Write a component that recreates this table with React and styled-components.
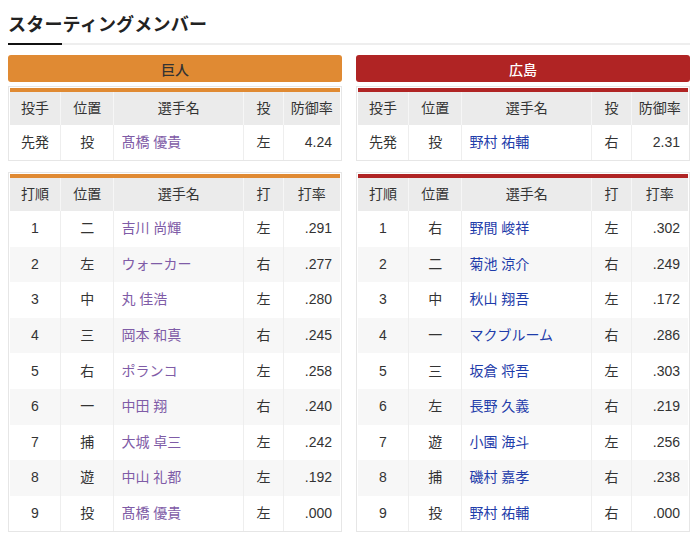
import React from "react";
import styled, { createGlobalStyle } from "styled-components";

const GlobalStyle = createGlobalStyle`
  body {
    margin: 0;
    background: #ffffff;
    font-family: "Liberation Sans", "Noto Sans CJK JP", "Noto Sans", sans-serif;
    color: #333333;
  }
`;

const Page = styled.div`
  width: 700px;
  padding: 8px 10px 0 8px;
  box-sizing: border-box;
`;

const TitleBox = styled.div`
  border-bottom: 2px solid #eeeeee;
  position: relative;
  padding: 2px 0 7px;
  margin-bottom: 10px;
`;

const Title = styled.h2`
  margin: 0;
  font-family: "Noto Sans CJK JP", sans-serif;
  font-size: 18px;
  font-weight: 700;
  line-height: 26px;
  color: #222222;
  letter-spacing: 0.2px;
`;

const TitleAccent = styled.span`
  position: absolute;
  left: 0;
  bottom: -2px;
  width: 54px;
  height: 2px;
  background: #111111;
`;

const Columns = styled.div`
  display: grid;
  grid-template-columns: 1fr 1fr;
  column-gap: 14px;
`;

const TeamColumn = styled.div`
  display: flex;
  flex-direction: column;
`;

const TeamBar = styled.div`
  height: 27px;
  border-radius: 3px;
  background: ${(p) => p.$color};
  color: ${(p) => p.$text};
  display: flex;
  align-items: center;
  justify-content: center;
  font-size: 14px;
  font-weight: 500;
  margin-bottom: 4px;
`;

const TableFrame = styled.div`
  border: 1px solid #e6e6e6;
  padding: 1px 1px 0;
  margin-bottom: ${(p) => p.$gap || 0}px;
`;

const Table = styled.table`
  width: 100%;
  border-collapse: collapse;
  table-layout: fixed;
  border-top: 4px solid ${(p) => p.$color};
  font-size: 14px;
  line-height: 18px;
`;

const Th = styled.th`
  height: 32px;
  padding: 0 0 1px;
  background: #ebebeb;
  font-weight: 400;
  color: #333333;
  border-left: 1px solid #f6f6f6;
  &:first-child {
    border-left: none;
  }
`;

const Row = styled.tr`
  background: ${(p) => (p.$odd ? "#ffffff" : "#f7f7f7")};
`;

const Td = styled.td`
  height: ${(p) => (p.$h || 35.6) - 1}px;
  padding: ${(p) => (p.$align === "left" ? "0 0 1px 7px" : p.$align === "right" ? "0 8px 1px 0" : "0 0 1px")};
  text-align: ${(p) => p.$align || "center"};
  border-left: 1px solid #eeeeee;
  color: ${(p) => p.$color || "#333333"};
  white-space: nowrap;
  &:first-child {
    border-left: none;
  }
`;

const widths = ["15.3%", "16.2%", "39.3%", "12%", "17.2%"];

const Cols = () => (
  <colgroup>
    {widths.map((w, i) => (
      <col key={i} style={{ width: w }} />
    ))}
  </colgroup>
);

const teams = [
  {
    name: "巨人",
    bar: "#e08a33",
    barText: "#333333",
    nameColor: "#7f5ca7",
    pitcher: ["先発", "投", "髙橋 優貴", "左", "4.24"],
    lineup: [
      ["1", "二", "吉川 尚輝", "左", ".291"],
      ["2", "左", "ウォーカー", "右", ".277"],
      ["3", "中", "丸 佳浩", "左", ".280"],
      ["4", "三", "岡本 和真", "右", ".245"],
      ["5", "右", "ポランコ", "左", ".258"],
      ["6", "一", "中田 翔", "右", ".240"],
      ["7", "捕", "大城 卓三", "左", ".242"],
      ["8", "遊", "中山 礼都", "左", ".192"],
      ["9", "投", "髙橋 優貴", "左", ".000"],
    ],
  },
  {
    name: "広島",
    bar: "#b02424",
    barText: "#ffffff",
    nameColor: "#1e3caa",
    pitcher: ["先発", "投", "野村 祐輔", "右", "2.31"],
    lineup: [
      ["1", "右", "野間 峻祥", "左", ".302"],
      ["2", "二", "菊池 涼介", "右", ".249"],
      ["3", "中", "秋山 翔吾", "左", ".172"],
      ["4", "一", "マクブルーム", "右", ".286"],
      ["5", "三", "坂倉 将吾", "左", ".303"],
      ["6", "左", "長野 久義", "右", ".219"],
      ["7", "遊", "小園 海斗", "左", ".256"],
      ["8", "捕", "磯村 嘉孝", "右", ".238"],
      ["9", "投", "野村 祐輔", "右", ".000"],
    ],
  },
];

const PlayerRow = ({ cells, odd, nameColor, h }) => (
  <Row $odd={odd}>
    <Td $h={h}>{cells[0]}</Td>
    <Td $h={h}>{cells[1]}</Td>
    <Td $h={h} $align="left" $color={nameColor}>
      {cells[2]}
    </Td>
    <Td $h={h}>{cells[3]}</Td>
    <Td $h={h} $align="right">
      {cells[4]}
    </Td>
  </Row>
);

const Team = ({ team }) => (
  <TeamColumn>
    <TeamBar $color={team.bar} $text={team.barText}>
      {team.name}
    </TeamBar>
    <TableFrame $gap={11}>
      <Table $color={team.bar}>
        <Cols />
        <thead>
          <tr>
            <Th>投手</Th>
            <Th>位置</Th>
            <Th>選手名</Th>
            <Th>投</Th>
            <Th>防御率</Th>
          </tr>
        </thead>
        <tbody>
          <PlayerRow cells={team.pitcher} odd nameColor={team.nameColor} h={35} />
        </tbody>
      </Table>
    </TableFrame>
    <TableFrame>
      <Table $color={team.bar}>
        <Cols />
        <thead>
          <tr>
            <Th>打順</Th>
            <Th>位置</Th>
            <Th>選手名</Th>
            <Th>打</Th>
            <Th>打率</Th>
          </tr>
        </thead>
        <tbody>
          {team.lineup.map((p, i) => (
            <PlayerRow key={i} cells={p} odd={i % 2 === 0} nameColor={team.nameColor} />
          ))}
        </tbody>
      </Table>
    </TableFrame>
  </TeamColumn>
);

export default function App() {
  return (
    <>
      <GlobalStyle />
      <Page>
        <TitleBox>
          <Title>スターティングメンバー</Title>
          <TitleAccent />
        </TitleBox>
        <Columns>
          {teams.map((t) => (
            <Team key={t.name} team={t} />
          ))}
        </Columns>
      </Page>
    </>
  );
}
